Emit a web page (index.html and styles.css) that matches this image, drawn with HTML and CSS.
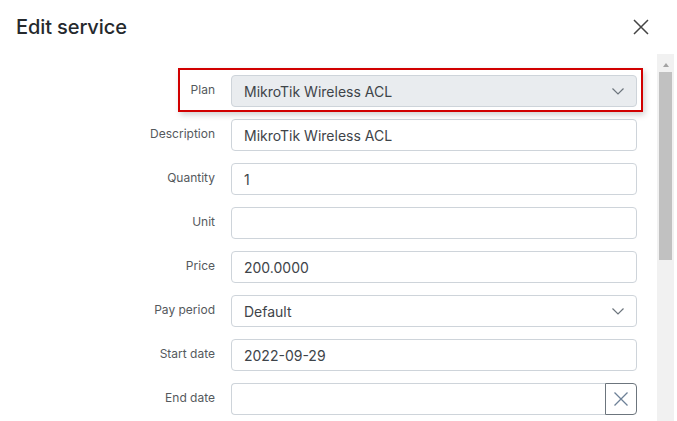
FILE: index.html
```html
<!DOCTYPE html>
<html lang="en">
<head>
<meta charset="utf-8">
<title>Edit service</title>
<link rel="stylesheet" href="styles.css">
</head>
<body>
<div class="modal">
  <header class="modal-header">
    <h2 class="modal-title">Edit service</h2>
    <button class="close-btn" type="button" aria-label="Close">
      <svg width="16" height="16" viewBox="0 0 16 16"><path d="M1 1L15 15M15 1L1 15" stroke="#444" stroke-width="1.5" fill="none"/></svg>
    </button>
  </header>
  <div class="modal-body">
    <form class="form">
      <div class="highlight"></div>
      <label class="label">Plan</label>
      <div class="select disabled"><span>MikroTik Wireless ACL</span><svg class="chev" width="12" height="7" viewBox="0 0 12 7"><path d="M0.5 0.5L6 6L11.5 0.5" stroke="#6c757d" stroke-width="1.2" fill="none"/></svg></div>

      <label class="label">Description</label>
      <div class="input">MikroTik Wireless ACL</div>

      <label class="label">Quantity</label>
      <div class="input">1</div>

      <label class="label">Unit</label>
      <div class="input"></div>

      <label class="label">Price</label>
      <div class="input">200.0000</div>

      <label class="label">Pay period</label>
      <div class="select"><span>Default</span><svg class="chev" width="12" height="7" viewBox="0 0 12 7"><path d="M0.5 0.5L6 6L11.5 0.5" stroke="#6c757d" stroke-width="1.2" fill="none"/></svg></div>

      <label class="label">Start date</label>
      <div class="input">2022-09-29</div>

      <label class="label">End date</label>
      <div class="input-group">
        <div class="input grouped"></div>
        <button class="clear-btn" type="button" aria-label="Clear">
          <svg width="14" height="14" viewBox="0 0 14 14"><path d="M0.5 0.5L13.5 13.5M13.5 0.5L0.5 13.5" stroke="#6d8197" stroke-width="1.3" fill="none"/></svg>
        </button>
      </div>
    </form>
    <div class="scrollbar">
      <span class="arrow"></span>
      <span class="thumb"></span>
    </div>
  </div>
</div>
</body>
</html>
```
FILE: styles.css
```css
* { box-sizing: border-box; }
html, body { margin: 0; padding: 0; background: #fff; }
body {
  font-family: Inter, "Noto Sans", sans-serif;
  color: #212529;
  width: 677px;
  height: 421px;
  overflow: hidden;
}
.modal { width: 677px; height: 421px; display: flex; flex-direction: column; }
.modal-header {
  height: 54px;
  display: flex;
  align-items: center;
  justify-content: space-between;
  padding: 0 28px 0 16px;
  flex: none;
}
.modal-title {
  margin: 0;
  font-size: 20px;
  font-weight: 500;
  color: #25292d;
  letter-spacing: -0.1px;
}
.close-btn {
  border: 0;
  background: none;
  padding: 0;
  width: 16px;
  height: 16px;
  display: flex;
}
.modal-body {
  flex: 1;
  display: flex;
  overflow: hidden;
}
.form {
  position: relative;
  width: 637px;
  padding-top: 21px;
  display: grid;
  grid-template-columns: 215px 406px;
  grid-auto-rows: 32px;
  column-gap: 16px;
  row-gap: 12px;
  align-content: start;
}
.highlight {
  position: absolute;
  left: 178px;
  top: 14px;
  width: 465px;
  height: 44px;
  border: 2.5px solid #d10000;
  box-shadow: 2px 3px 6px rgba(0,0,0,0.18);
  pointer-events: none;
  z-index: 2;
}
.label {
  font-size: 12px;
  color: #55595d;
  text-align: right;
  align-self: center;
  margin-top: -3px;
}
.input, .select {
  height: 32px;
  border: 1px solid #ced4da;
  border-radius: 4px;
  padding: 0 12px;
  font-size: 14px;
  color: #3e4449;
  display: flex;
  align-items: center;
  background: #fff;
}
.select { justify-content: space-between; }
.select.disabled { background: #e9ecef; }
.input-group { display: flex; }
.input.grouped {
  flex: 1;
  border-radius: 4px 0 0 4px;
  border-right: 0;
}
.clear-btn {
  width: 32px;
  height: 32px;
  border: 1px solid #6c757d;
  border-radius: 0 4px 4px 0;
  background: #fff;
  padding: 0;
  display: flex;
  align-items: center;
  justify-content: center;
}
.scrollbar {
  width: 17px;
  margin-left: 20px;
  background: #f1f1f1;
  display: flex;
  flex-direction: column;
  align-items: center;
  padding-top: 9px;
}
.arrow {
  width: 0;
  height: 0;
  border-left: 3.5px solid transparent;
  border-right: 3.5px solid transparent;
  border-bottom: 4px solid #a3a3a3;
}
.thumb {
  width: 13px;
  height: 188px;
  margin-top: 5px;
  background: #c1c1c1;
}
```
